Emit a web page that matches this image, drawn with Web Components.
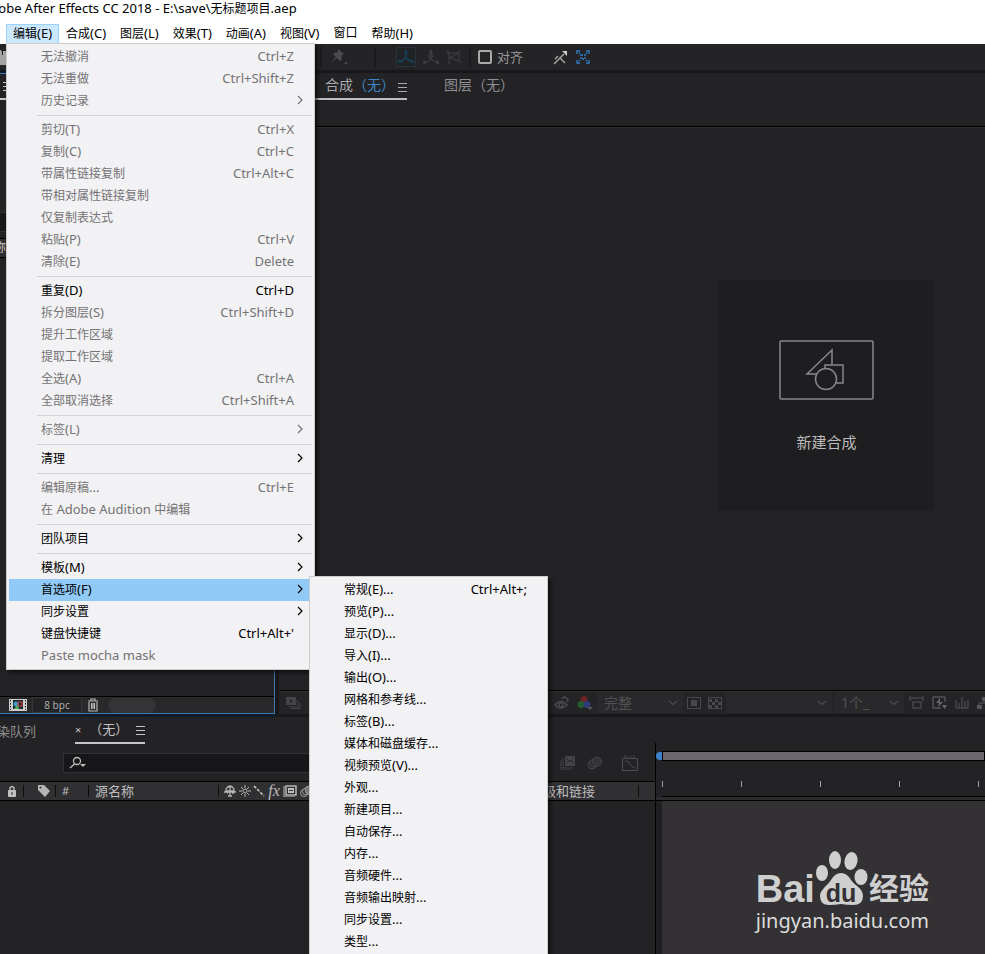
<!DOCTYPE html>
<html lang="zh-CN">
<head>
<meta charset="utf-8">
<title>Adobe After Effects CC 2018</title>
<style>
html,body{margin:0;height:100%;overflow:hidden;background:#232225}
body{font-family:"Noto Sans","Noto Sans CJK SC",sans-serif;font-size:12px;color:#000}
</style>
</head>
<body>
<ae-window>
  <ae-titlebar slot="title" text="Adobe After Effects CC 2018 - E:\save\无标题项目.aep"></ae-titlebar>
  <ae-menubar slot="menubar">
    <ae-menu-button label="编辑(E)" open>
      <ae-menu>
        <ae-item label="无法撤消" key="Ctrl+Z" disabled></ae-item>
        <ae-item label="无法重做" key="Ctrl+Shift+Z" disabled></ae-item>
        <ae-item label="历史记录" arrow disabled></ae-item>
        <ae-separator></ae-separator>
        <ae-item label="剪切(T)" key="Ctrl+X" disabled></ae-item>
        <ae-item label="复制(C)" key="Ctrl+C" disabled></ae-item>
        <ae-item label="带属性链接复制" key="Ctrl+Alt+C" disabled></ae-item>
        <ae-item label="带相对属性链接复制" disabled></ae-item>
        <ae-item label="仅复制表达式" disabled></ae-item>
        <ae-item label="粘贴(P)" key="Ctrl+V" disabled></ae-item>
        <ae-item label="清除(E)" key="Delete" disabled></ae-item>
        <ae-separator></ae-separator>
        <ae-item label="重复(D)" key="Ctrl+D"></ae-item>
        <ae-item label="拆分图层(S)" key="Ctrl+Shift+D" disabled></ae-item>
        <ae-item label="提升工作区域" disabled></ae-item>
        <ae-item label="提取工作区域" disabled></ae-item>
        <ae-item label="全选(A)" key="Ctrl+A" disabled></ae-item>
        <ae-item label="全部取消选择" key="Ctrl+Shift+A" disabled></ae-item>
        <ae-separator></ae-separator>
        <ae-item label="标签(L)" arrow disabled></ae-item>
        <ae-separator></ae-separator>
        <ae-item label="清理" arrow></ae-item>
        <ae-separator></ae-separator>
        <ae-item label="编辑原稿..." key="Ctrl+E" disabled></ae-item>
        <ae-item label="在 Adobe Audition 中编辑" disabled></ae-item>
        <ae-separator></ae-separator>
        <ae-item label="团队项目" arrow></ae-item>
        <ae-separator></ae-separator>
        <ae-item label="模板(M)" arrow></ae-item>
        <ae-item label="首选项(F)" arrow open>
          <ae-menu class="sub">
            <ae-item label="常规(E)..." key="Ctrl+Alt+;"></ae-item>
            <ae-item label="预览(P)..."></ae-item>
            <ae-item label="显示(D)..."></ae-item>
            <ae-item label="导入(I)..."></ae-item>
            <ae-item label="输出(O)..."></ae-item>
            <ae-item label="网格和参考线..."></ae-item>
            <ae-item label="标签(B)..."></ae-item>
            <ae-item label="媒体和磁盘缓存..."></ae-item>
            <ae-item label="视频预览(V)..."></ae-item>
            <ae-item label="外观..."></ae-item>
            <ae-item label="新建项目..."></ae-item>
            <ae-item label="自动保存..."></ae-item>
            <ae-item label="内存..."></ae-item>
            <ae-item label="音频硬件..."></ae-item>
            <ae-item label="音频输出映射..."></ae-item>
            <ae-item label="同步设置..."></ae-item>
            <ae-item label="类型..."></ae-item>
          </ae-menu>
        </ae-item>
        <ae-item label="同步设置" arrow></ae-item>
        <ae-item label="键盘快捷键" key="Ctrl+Alt+'"></ae-item>
        <ae-item label="Paste mocha mask" disabled></ae-item>
      </ae-menu>
    </ae-menu-button>
    <ae-menu-button label="合成(C)"></ae-menu-button>
    <ae-menu-button label="图层(L)"></ae-menu-button>
    <ae-menu-button label="效果(T)"></ae-menu-button>
    <ae-menu-button label="动画(A)"></ae-menu-button>
    <ae-menu-button label="视图(V)"></ae-menu-button>
    <ae-menu-button label="窗口"></ae-menu-button>
    <ae-menu-button label="帮助(H)"></ae-menu-button>
  </ae-menubar>
  <ae-toolbar slot="toolbar"></ae-toolbar>
  <ae-project slot="project"></ae-project>
  <ae-composition slot="composition"></ae-composition>
  <ae-timeline slot="timeline"></ae-timeline>
</ae-window>
<ae-watermark></ae-watermark>

<script>
const ICONS = {
  hand:[24,20,'<path d="M5 18 2 11V8h2l1 3V3h3v6h1V1h3v8h1V2h3v8h1V4h3v9l-2 5z" fill="#9b9b9b"/><path d="M17 3h2v5h2V4h3v14h-7z" fill="#a5a5a5"/>'],
  pin:[18,16,'<path d="M9 0l6 5-2 1-1 4 1 1-2 1-3-3-6 5 5-6-3-3 1-1 4-1z" fill="#4b4b4d"/><path d="M18 12v3h-3z" fill="#4b4b4d"/>'],
  axis:[18,18,'<path d="M9 10V3M9 10l-6 4M9 10l6 4" stroke="#17405a" stroke-width="1.6" fill="none"/><path d="M9 1l2 4H7zM1 15l1-4 3 3zM17 15l-1-4-3 3z" fill="#17405a"/>'],
  axis2:[16,16,'<path d="M8 10V2M8 10l-6 4M8 10l6 4" stroke="#414143" fill="none"/><path d="M8 0l2 4H6zM0 15l1-4 3 3zM16 15l-1-4-3 3z" fill="#414143"/><circle cx="8" cy="7" r="2" fill="none" stroke="#414143"/>'],
  axis3:[16,16,'<path d="M3 4h10v8L4 9zM3 4v11M1 1l3 3M0 4h3M13 1v3M12 4L4 9M13 12l2 2" stroke="#414143" fill="none"/>'],
  snap:[16,16,'<path d="M2 15l6-6 5 5M8 9l4-4M3 10l3-3" stroke="#aaa" stroke-width="1.4" fill="none"/><path d="M10 2h5v5z" fill="#ccc"/>'],
  bound:[16,16,'<g fill="none" stroke="#2f7fc8" stroke-width="1.3"><path d="M2 5V2h3M11 2h3v3M14 11v3h-3M5 14H2v-3"/><rect x="6" y="6" width="4" height="4" stroke-dasharray="2 1"/><path d="M4 4l1 1M12 4l-1 1M4 12l1-1M12 12l-1-1"/></g>'],
  menu:[9,10,'<path d="M0 1.500h9M0 5.500h9M0 9.500h9" stroke="currentColor"/>'],
  chev:[10,6,'<path d="M1 1l4 3.500L9 1" stroke="#4b4b4e" fill="none" stroke-width="1.300"/>'],
  arrow:[6,10,'<path d="M1 1l4 4-4 4" stroke="currentColor" fill="none" stroke-width="1.200"/>'],
  interpret:[18,14,'<rect x="0" y="1" width="18" height="12" fill="#ccc"/><path d="M1.500 2v10M16.500 2v10" stroke="#252427" stroke-dasharray="1.500 1.500"/><rect x="4" y="2" width="10" height="9" fill="#1d2830"/><circle cx="7" cy="6" r="2.500" fill="#399bd0"/><path d="M5 11l4-5 1 5z" fill="#4fae5e"/><path d="M9 4h4v4h-4z" fill="none" stroke="#d54343"/>'],
  trash:[12,14,'<g fill="none" stroke="#b5b5b5" stroke-width="1.200"><path d="M1 3h10M4 3V1h4v2M2 4v9h8V4M4.500 5v6M6 5v6M7.500 5v6"/></g>'],
  stack:[16,14,'<g fill="none" stroke="#444447"><path d="M4 10v1h9V5h-2M6 12.500h9V7"/></g><rect x="1" y="1" width="10" height="8" fill="#444447"/><path d="M5 3l3 2-3 2z" fill="#242326"/>'],
  eye:[16,14,'<g fill="none" stroke="#4a4a4d" stroke-width="1.500"><path d="M1 9q6-7 12 0q-6 6-12 0z"/><circle cx="7" cy="9" r="2"/><path d="M8 3q1-2 3-2l3 2-1 3"/></g>'],
  rgb:[16,16,'<circle cx="7" cy="4.500" r="3.500" fill="#6b2528"/><circle cx="4" cy="9.500" r="3.500" fill="#235c30"/><circle cx="10" cy="9.500" r="3.500" fill="#303a78"/><path d="M10 12h6l-3 3z" fill="#555"/>'],
  region:[14,12,'<rect x=".5" y=".5" width="13" height="11" fill="none" stroke="#48484b"/><rect x="4" y="3" width="6" height="6" fill="#48484b"/>'],
  grid:[14,12,'<rect x=".5" y=".5" width="13" height="11" fill="none" stroke="#48484b"/><path d="M1 2h3v3H1zM7 2h3v3H7zM4 5h3v3H4zM10 5h3v3h-3zM1 8h3v3H1zM7 8h3v3H7z" fill="#48484b"/>'],
  pixel:[16,14,'<path d="M1 2h13M1 0v5M14 0v5" stroke="#555558" fill="none"/><rect x="4" y="6" width="8" height="6" fill="none" stroke="#555558"/>'],
  fast:[16,14,'<path d="M13 6V1H1v11h8" stroke="#68686b" fill="none"/><path d="M8 2L4 7h3l-1 4 5-5H8z" fill="#68686b"/><path d="M10 9h5l-2.500 4z" fill="#68686b"/>'],
  chart:[14,14,'<path d="M1 4v8h12V4M4 7v5M7 1v11M10 5v7" stroke="#555558" fill="none"/>'],
  flow:[16,14,'<path d="M6 1h5v4H6zM1 9h5v4H1zM9 9h5v4H9z" fill="#555558"/><path d="M8 5v2M3 9V7h8v2" stroke="#555558" fill="none"/>'],
  search:[18,14,'<circle cx="8" cy="5" r="3.500" fill="none" stroke="#bdbdbd" stroke-width="1.300"/><path d="M5.500 8L1 12" stroke="#bdbdbd" stroke-width="1.500"/><path d="M11 8h6l-3 3z" fill="#bdbdbd"/>'],
  lock:[10,12,'<rect x="1" y="5" width="8" height="7" rx="1" fill="#c2c2c2"/><path d="M3 5V3q2-3 4 0v2" stroke="#c2c2c2" stroke-width="1.400" fill="none"/><path d="M5 7v3" stroke="#333"/>'],
  tag:[14,14,'<path d="M1 1h6l6 6-5 6-7-7z" fill="#b5b5b5"/><circle cx="3.500" cy="3.500" r="1" fill="#302f32"/>'],
  shy:[14,12,'<path d="M3 6V4q4-6 8 0v2zM1 7h12M7 1v10M5 11h4M4 8h1M9 8h2" stroke="#b5b5b5" fill="none" stroke-width="1.300"/>'],
  sun:[12,12,'<circle cx="6" cy="6" r="2" fill="none" stroke="#b5b5b5"/><path d="M6 0v3M6 9v3M0 6h3M9 6h3M2 2l2 2M8 8l2 2M10 2L8 4M4 8l-2 2" stroke="#b5b5b5"/>'],
  slash:[12,12,'<path d="M1 1l10 10" stroke="#c5c5c5" stroke-width="1.600" stroke-dasharray="3 1.500"/>'],
  film:[14,12,'<rect x="3" y="1" width="10" height="9" fill="none" stroke="#c0c0c0" stroke-width="1.400"/><path d="M5 3h6v5H5z" fill="#c0c0c0"/><path d="M6 5.500h4" stroke="#302f32"/><path d="M1 1v11h11" stroke="#c0c0c0" fill="none"/>'],
  circles:[15,12,'<g stroke="#9a9a9a" fill="#302f32"><circle cx="5" cy="8" r="3.500"/><circle cx="7" cy="6.500" r="3.500"/><circle cx="10" cy="5" r="4" fill="#777"/></g>'],
  filmdim:[16,14,'<rect x="5" y="0" width="10" height="10" fill="#454548"/><path d="M7 1v8M13 1v8" stroke="#242326" stroke-dasharray="1 1"/><path d="M8 5h4" stroke="#242326"/><path d="M3 2v10h10M1 4v10h10" stroke="#454548" fill="none"/>'],
  circdim:[16,14,'<g stroke="#464649" fill="#29282b"><circle cx="5" cy="9" r="4"/><circle cx="7" cy="7" r="4"/><circle cx="10" cy="5.500" r="4.500" fill="#343437"/></g>'],
  graph:[16,16,'<path d="M.5 3.500h15v12H.5zM3 3V0M6 3V1M9 3V1M12 3V0M3 6q4 0 5 3t5 4" fill="none" stroke="#4d4d50"/>'],
  shapes:[95,60,'<g fill="#1e1d1f" stroke="#88868a" stroke-width="1.500"><rect x="1" y="1" width="93" height="58" rx="1"/><path d="M53 10v24H28z"/><rect x="46" y="25" width="18" height="18"/><circle cx="47" cy="39" r="10.500"/></g>'],
  paw:[54,58,'<g fill="#cfcfd0"><ellipse cx="7" cy="24" rx="6" ry="8"/><ellipse cx="20" cy="11" rx="6" ry="9"/><ellipse cx="36" cy="12" rx="6.500" ry="9" transform="rotate(12 36 12)"/><ellipse cx="46" cy="28" rx="6.500" ry="8"/><path d="M26 24q6 0 10 7c4 6 12 8 12 16q0 9-10 9-6 0-12-1-6 1-12 1-9 0-9-9c0-6 7-10 11-16q4-7 10-7z"/></g>']
};
const BASE = ':host,*{box-sizing:border-box}button,select,input{font:inherit;color:inherit;background:none;border:0;margin:0;padding:0;border-radius:0;outline:0}';
const runs = s => s.replace(/[\x20-\x7e]+/g, m => `<span class="l">${m}</span>`);
function define(name, render){
  customElements.define(name, class extends HTMLElement{
    constructor(){ super(); this.attachShadow({mode:'open'}); }
    connectedCallback(){
      const t = document.createElement('template');
      const [css, html] = render(this);
      t.innerHTML = `<style>${BASE}${css}</style>${html}`;
      this.shadowRoot.replaceChildren(t.content.cloneNode(true));
    }
  });
}
define('ae-icon', e => {
  const [w,h,s] = ICONS[e.getAttribute('name')];
  return [`:host{display:block;flex:none}svg{display:block}`, `<svg width="${w}" height="${h}" viewBox="0 0 ${w} ${h}" aria-hidden="true">${s}</svg>`];
});
define('ae-window', () => [`
  :host{display:grid;grid-template:24px 20px 26px minmax(0,1fr) 237px/293px minmax(0,1fr);margin-left:-18px;height:100vh;overflow:hidden;background:#18171a;color:#8f8f91}
  .t,.m,.b,.tl{grid-column:1/-1;display:grid}.m{z-index:2}
  .b{background:#242326}
  .p,.c{display:grid;padding:3px 0;min-width:0;min-height:0}.p{background:#101b28}.c{padding-left:4px}`,
  `<div class="t"><slot name="title"></slot></div><div class="m"><slot name="menubar"></slot></div><div class="b"><slot name="toolbar"></slot></div>
   <div class="p"><slot name="project"></slot></div><div class="c"><slot name="composition"></slot></div><div class="tl"><slot name="timeline"></slot></div>`]);
define('ae-titlebar', e => [`:host{display:block;background:#fff;color:#000;line-height:16px;white-space:nowrap}.l{font-size:13px}`, `<div>${runs(e.getAttribute('text'))}</div>`]);
define('ae-menubar', () => [`:host{display:flex;background:#fff;color:#000;padding-left:24px}`, `<slot></slot>`]);
define('ae-menu-button', e => [`
  :host{display:block;position:relative}
  button{height:20px;padding:0 6px 2px;border:1px solid transparent;line-height:16px;white-space:nowrap;display:block}
  :host([open]) button{background:#cce8ff;border-color:#99d1ff}
  .l{font-size:13px}
  .pop{position:absolute;left:0;top:19px}`,
  `<button>${runs(e.getAttribute('label'))}</button><div class="pop"><slot></slot></div>`]);
define('ae-menu', () => [`
  :host{display:block;width:309px;background:#f2f1f3;border:1px solid #cccccd;padding:2px;box-shadow:3px 3px 3px #00000080;color:#000}
  :host(.sub){width:239px}`, `<slot></slot>`]);
define('ae-separator', () => [`:host{display:block;padding:3px 0 3px 28px}hr{margin:0;border:0;height:1px;background:#d2d1d3}`, `<hr>`]);
define('ae-item', e => [`
  :host{display:block;position:relative;color:#000}
  :host([disabled]){color:#747375}
  :host([open]){background:#91c9f7}
  button{display:flex;align-items:center;width:100%;height:22px;padding:0 9px 2px 32px;text-align:left;white-space:nowrap}
  .name{flex:1}.l,.key{font-size:13px}.key{padding-right:9px}
  .pop{position:absolute;left:calc(100% - 3px);top:-3px;z-index:3}`,
  `<button ${e.hasAttribute('disabled')?'disabled':''}><span class="name">${runs(e.getAttribute('label'))}</span>${e.hasAttribute('key')?`<span class="key">${e.getAttribute('key')}</span>`:''}${e.hasAttribute('arrow')?'<ae-icon name="arrow"></ae-icon>':''}</button><div class="pop"><slot></slot></div>`]);
define('ae-toolbar', () => [`
  :host{display:flex;align-items:center;gap:7px;color:#9a9a9c;font-size:13px}
  .first{width:331px}.space{width:6px}
  i{width:2px;height:20px;background:#19181b}
  .on{border:1px solid #29323a;background:#1f2326}
  label{display:flex;align-items:center;gap:5px;margin-right:22px;line-height:20px}
  input{appearance:none;width:14px;height:14px;border:2px solid #aaa;border-radius:2px}
  .pin{margin-right:20px}button{display:block}`,
  `<div class="first"><ae-icon name="hand"></ae-icon></div><i></i><button class="pin"><ae-icon name="pin"></ae-icon></button><i></i><span class="space"></span>
   <button class="on"><ae-icon name="axis"></ae-icon></button><button><ae-icon name="axis2"></ae-icon></button><button><ae-icon name="axis3"></ae-icon></button><i></i>
   <label><input type="checkbox">对齐</label><button><ae-icon name="snap"></ae-icon></button><button><ae-icon name="bound"></ae-icon></button>`]);
define('ae-project', () => [`
  :host{display:flex;flex-direction:column;background:#232225;border:1px solid #3d7ab5;border-left:0;min-height:0}
  .tab{display:flex;align-items:center;height:26px;width:180px;padding-left:21px;border-bottom:2px solid #c5c4c6;color:#c5c4c6}
  .view{height:112px}
  input{display:block;width:100%;height:20px;background:#171619;border:1px solid #343336}
  .cols{margin-top:6px;height:20px;line-height:18px;background:#302f32;border:1px solid #000;border-width:1px 0;color:#c5c4c6}
  .body{flex:1}
  .foot{display:flex;align-items:center;gap:5px;height:17px;border-top:1px solid #000;background:#29282b;padding-left:27px}
  .bpc{width:50px;height:16px;border:1px solid #353437;background:#232225;font-size:10px;line-height:14px;color:#aaa}
  .pill{width:48px;height:15px;border-radius:8px;background:#343336;margin-left:4px}`,
  `<div class="tab"><ae-icon name="menu"></ae-icon></div><div class="view"></div><input type="search" aria-label="搜索项目"><div class="cols">名称</div><div class="body"></div>
   <div class="foot"><ae-icon name="interpret"></ae-icon><button class="bpc">8 bpc</button><ae-icon name="trash"></ae-icon><span class="pill"></span></div>`]);
define('ae-composition', () => [`
  :host{display:flex;flex-direction:column;background:#232225;min-width:0;min-height:0;font-size:14px}
  .tabs{display:flex;gap:37px;height:27px;line-height:24px;white-space:nowrap}
  .tab{display:flex;height:27px}
  .tab ae-icon{margin-top:9px}
  .active{padding-left:46px;border-bottom:2px solid #bdbbbe;gap:3px;color:#a9a8ab}
  em{font-style:normal;color:#3d85c8}
  .view{flex:1;margin-top:26px;border-top:1px solid #000;box-shadow:inset 0 1px #2e2d30;display:flex;justify-content:flex-end;align-items:center;padding:0 51px 26px}
  .card{width:215px;height:231px;background:#1e1d1f;display:flex;flex-direction:column;align-items:center;padding-top:60px;gap:31px;color:#bcbbbd;font-size:15px;line-height:22px}
  .foot{height:24px;display:flex;align-items:center;background:#242326;border-top:1px solid #000;box-shadow:inset 0 1px #323134;color:#515053;padding-left:6px;overflow:hidden}
  .sel{display:flex;align-items:center;background:#29282b;height:20px;padding:0 5px 0 7px;margin-right:2px;flex:none}
  select{appearance:none;flex:1;min-width:0}
  .quality{width:86px}.camera{width:106px}.views{width:70px}
  .gap{width:253px;flex:none}.set{display:flex;gap:7px;margin-right:4px;align-items:center}.set.mid{padding-left:2px}.set.end{padding-left:3px}`,
  `<div class="tabs"><div class="tab active"><span>合成<em>（无）</em></span><ae-icon name="menu"></ae-icon></div><div class="tab">图层（无）</div></div>
   <div class="view"><button class="card"><ae-icon name="shapes"></ae-icon>新建合成</button></div>
   <div class="foot"><ae-icon name="stack"></ae-icon><span class="gap"></span><span class="set"><ae-icon name="eye"></ae-icon><ae-icon name="rgb"></ae-icon></span>
   <span class="sel quality"><select aria-label="分辨率"><option>完整</option></select><ae-icon name="chev"></ae-icon></span>
   <span class="set mid"><ae-icon name="region"></ae-icon><ae-icon name="grid"></ae-icon></span>
   <span class="sel camera"><select aria-label="3D 视图"><option></option></select><ae-icon name="chev"></ae-icon></span>
   <span class="sel views"><select aria-label="视图布局"><option>1个_</option></select><ae-icon name="chev"></ae-icon></span>
   <span class="set end"><ae-icon name="pixel"></ae-icon><ae-icon name="fast"></ae-icon><ae-icon name="chart"></ae-icon><ae-icon name="flow"></ae-icon></span></div>`]);
define('ae-timeline', () => [`
  :host{display:grid;grid-template:26px 38px 20px minmax(0,1fr)/673px minmax(0,1fr);background:#232225;font-size:13px}
  .tabs{grid-column:1/-1;display:flex;gap:39px;padding-left:2px;line-height:28px}
  .tab{display:flex;align-items:center;gap:8px;height:27px;border-bottom:2px solid #c5c4c6;color:#c5c4c6;line-height:27px}
  .x{font-size:11px}
  .tools{display:flex;align-items:center;gap:11px;padding:1px 17px 0 81px}
  .search{display:flex;align-items:center;width:340px;height:20px;background:#171619;border:1px solid #313033;padding-left:5px;margin-right:auto}
  .search input{flex:1;min-width:0}
  .graph{margin-left:8px}
  .ruler{grid-row:2/4;grid-column:2;border-left:1px solid #000;display:flex;flex-direction:column}
  .work{display:flex;margin-top:8px;height:10px}
  .work b{width:6px;height:8px;margin-top:1px;background:#3c82cc;border-radius:6px 0 0 6px}
  .work u{flex:1;background:#6a686b;border:1px solid #000}
  .ticks{flex:1;margin-left:6px;border-bottom:1px solid #000;background:repeating-linear-gradient(90deg,#a3a2a4 0 1px,transparent 1px 79px) 0 20px/100% 6px no-repeat}
  .under{height:4px;background:#2c2b2e;border-bottom:1px solid #000}
  .cols{grid-row:3;display:flex;align-items:center;background:#302f32;border:1px solid #000;border-width:1px 0;color:#bdbcbe;padding-left:25px;line-height:18px}
  .cols i{width:1px;height:12px;background:#0d0d0e}
  .cols>span{display:flex;align-items:center}
  .c1{width:16px}.c2{width:31px;padding-left:13px}.c3{width:32px;padding-left:6px;font-size:11px}.c4{width:129px;padding-left:6px}.c5{gap:2px;width:311px;padding-left:4px}.c6{width:108px}
  .fx{font:italic 16px/14px "Liberation Serif",serif;width:14px;text-align:center}
  .layers{grid-row:4}
  .track{border-left:1px solid #000;padding-left:6px;background:#1f1e21;display:grid;grid-row:4}.track div{background:#333134}`,
  `<div class="tabs"><span>渲染队列</span><div class="tab"><span class="x">×</span><span>（无）</span><ae-icon name="menu"></ae-icon></div></div>
   <div class="tools"><div class="search"><ae-icon name="search"></ae-icon><input type="text" aria-label="搜索图层"></div><ae-icon name="filmdim"></ae-icon><ae-icon name="circdim"></ae-icon><ae-icon class="graph" name="graph"></ae-icon></div>
   <div class="ruler"><div class="work"><b></b><u></u></div><div class="ticks"></div><div class="under"></div></div>
   <div class="cols"><span class="c1"><ae-icon name="lock"></ae-icon></span><i></i><span class="c2"><ae-icon name="tag"></ae-icon></span><i></i><span class="c3">#</span><i></i><span class="c4">源名称</span><i></i>
   <span class="c5"><ae-icon name="shy"></ae-icon><ae-icon name="sun"></ae-icon><ae-icon name="slash"></ae-icon><span class="fx">fx</span><ae-icon name="film"></ae-icon><ae-icon name="circles"></ae-icon></span><span class="c6">父级和链接</span><i></i></div>
   <div class="layers"></div><div class="track"><div></div></div>`]);
define('ae-watermark', () => [`
  :host{position:absolute;right:56px;bottom:19px;color:#cfcfd0;z-index:1}
  .logo{display:flex;align-items:flex-end;height:58px;font:bold 38px/36px "Liberation Sans",sans-serif}
  .paw{position:relative}
  .paw span{position:absolute;left:0;right:2px;bottom:2px;text-align:center;color:#333134;font:bold 25px/24px "Liberation Sans",sans-serif}
  .cn{font:bold 30px/42px "Noto Sans CJK SC",sans-serif}
  .url{font-size:20px;line-height:28px;color:#dcdcdd}`,
  `<div class="logo"><span>Bai</span><div class="paw"><ae-icon name="paw"></ae-icon><span>du</span></div><span class="cn">经验</span></div><div class="url">jingyan.baidu.com</div>`]);
</script>
</body>
</html>
